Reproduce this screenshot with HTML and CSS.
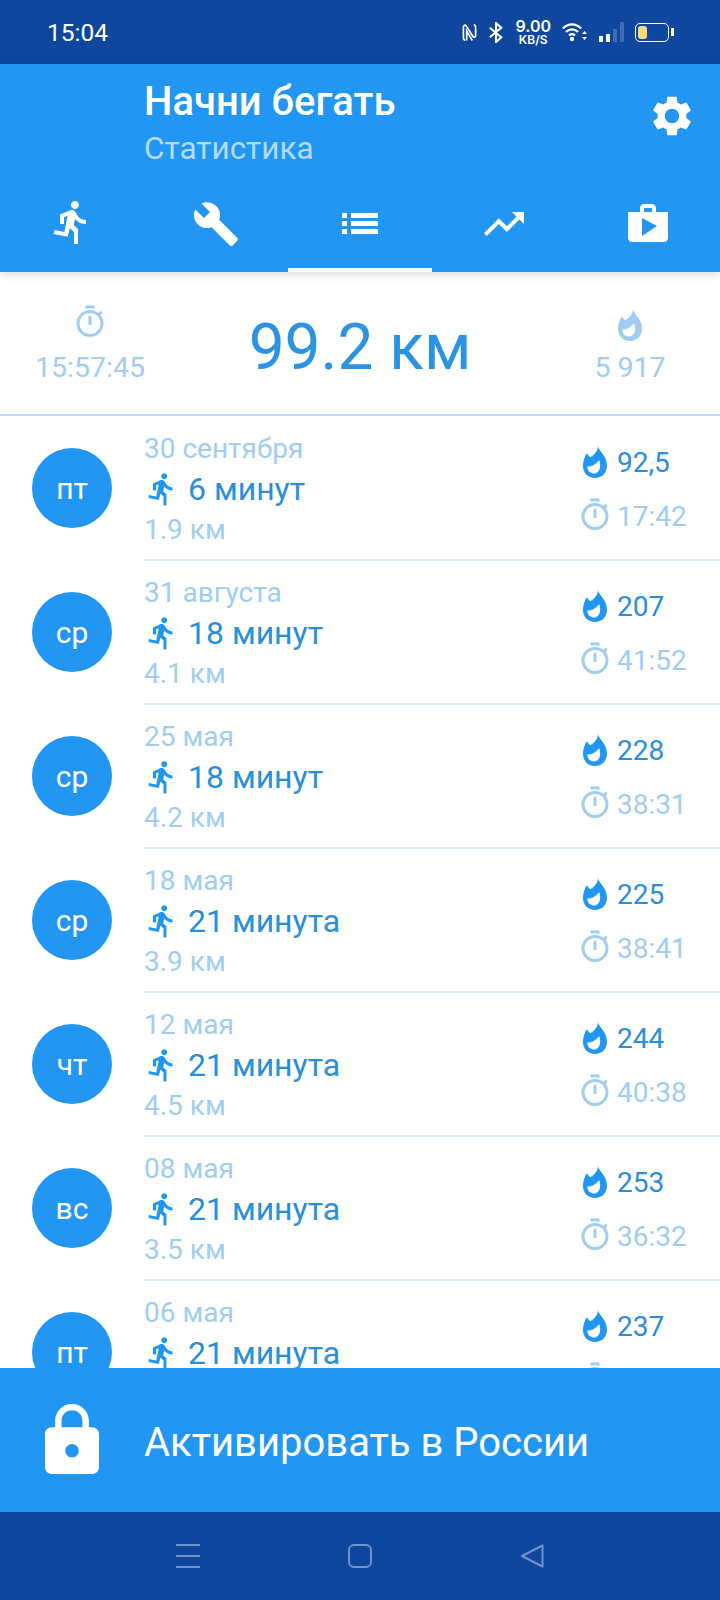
FILE: index.html
```html
<!DOCTYPE html>
<html lang="ru">
  <head>
    <meta charset="UTF-8" />
    <meta name="viewport" content="width=device-width, initial-scale=1.0" />
    <title>Начни бегать</title>
    <link rel="stylesheet" href="styles.css">
  </head>
  <body>
    <!-- Shared icons -->
    <svg class="icon-defs" width="0" height="0">
      <symbol id="i-run" viewBox="0 0 24 24"><path d="M13.49 5.48c1.1 0 2-.9 2-2s-.9-2-2-2-2 .9-2 2 .9 2 2 2zm-3.6 13.9l1-4.4 2.1 2v6h2v-7.5l-2.1-2 .6-3c1.3 1.5 3.3 2.5 5.5 2.5v-2c-1.9 0-3.5-1-4.3-2.4l-1-1.6c-.4-.6-1-1-1.7-1-.3 0-.5.1-.8.1l-5.2 2.2v4.7h2v-3.4l1.8-.7-1.6 8.1-4.9-1-.4 2 7 1.4z"/></symbol>
      <symbol id="i-timer" viewBox="0 0 24 24"><path d="M15 1H9v2h6V1zm-4 13h2V8h-2v6zm8.03-6.61l1.42-1.42c-.43-.51-.9-.99-1.41-1.41l-1.42 1.42C16.07 4.74 14.12 4 12 4c-4.97 0-9 4.03-9 9s4.02 9 9 9 9-4.03 9-9c0-2.12-.74-4.07-1.97-5.61zM12 20c-3.87 0-7-3.13-7-7s3.13-7 7-7 7 3.13 7 7-3.13 7-7 7z"/></symbol>
      <symbol id="i-flame" viewBox="0 0 24 32"><path fill-rule="evenodd" d="M15 0C15.500 5 24 9 24 20 24 27 18.500 32 12 32 5 32 0 27 0 20 0 15 1.500 10.500 4 7 4.500 9 6 10.500 7.500 11 11 9 15 5 15 0ZM16 14C13.500 18 9.500 20.500 4.500 20.500 4 24.500 7 27.500 11 27.500 16 27.500 19 21 16 14Z"/></symbol>
    </svg>

    <div class="screen">
      <div class="status-bar">
        <span class="clock">15:04</span>
        <div class="status-icons">
          <svg viewBox="0 0 16 20" width="15" height="19"><path d="M3.500 18.500C2 18 1.500 17 1.500 15.500V4.500C1.500 2 3.500 1.500 4.500 3L11.500 14C12.500 15.500 14.500 15.500 14.500 13.500V4.500C14.500 3 14 2 12.500 1.500M5 18.500V8.500L11 18.500" fill="none" stroke="#fff" stroke-width="1.800"/></svg>
          <svg viewBox="0 0 16 22" width="16" height="21"><path d="M1.500 6l12 10-5.500 5V1l5.500 5-12 10" fill="none" stroke="#fff" stroke-width="2.200"/></svg>
          <div class="speed"><span class="speed-num">9.00</span><span class="speed-unit">KB/S</span></div>
          <svg viewBox="0 0 26 20" width="26" height="20"><path d="M1 6.500c5-5.500 13-5.500 18 0M4 10c3.500-3.500 8.500-3.500 12 0M7 13.500c2-2 4-2 6 0" fill="none" stroke="#fff" stroke-width="2.300"/><circle cx="10" cy="17" r="2.200" fill="#fff"/><path d="M20 12l2.500-3 2.500 3zM20 15l2.500 3 2.500-3z" fill="#fff"/></svg>
          <div class="signal">
            <i class="bar-1"></i><i class="bar-2"></i><i class="bar-3"></i><i class="bar-4"></i>
          </div>
          <div class="battery"><span class="battery-fill"></span></div>
        </div>
      </div>

      <header class="app-bar">
        <div class="app-head">
          <div class="app-titles">
            <h1>Начни бегать</h1>
            <p>Статистика</p>
          </div>
          <svg class="gear" viewBox="0 0 24 24" width="48" height="48"><path d="M19.140 12.940c.04-.3.06-.61.06-.94 0-.32-.02-.64-.07-.94l2.030-1.580c.18-.14.23-.41.12-.61l-1.920-3.320c-.12-.22-.37-.29-.59-.22l-2.390.96c-.5-.38-1.030-.7-1.620-.94l-.36-2.540c-.04-.24-.24-.41-.48-.41h-3.840c-.24 0-.43.17-.47.41l-.36 2.540c-.59.24-1.130.57-1.620.94l-2.390-.96c-.22-.08-.47 0-.59.22L2.740 8.870c-.12.21-.08.47.12.61l2.030 1.580c-.05.3-.09.63-.09.94s.02.64.07.94l-2.030 1.580c-.18.14-.23.41-.12.61l1.920 3.320c.12.22.37.29.59.22l2.390-.96c.5.38 1.030.7 1.620.94l.36 2.540c.05.24.24.41.48.41h3.840c.24 0 .44-.17.47-.41l.36-2.540c.59-.24 1.130-.56 1.620-.94l2.390.96c.22.08.47 0 .59-.22l1.920-3.320c.12-.22.07-.47-.12-.61l-2.010-1.580zM12 15.600c-1.980 0-3.600-1.620-3.600-3.600s1.620-3.600 3.600-3.600 3.600 1.620 3.600 3.600-1.620 3.600-3.600 3.600z"/></svg>
        </div>
        <nav class="tabs">
          <div class="tab tab-run"><svg width="48" height="48"><use href="#i-run"/></svg></div>
          <div class="tab"><svg viewBox="0 0 24 24" width="48" height="48"><path d="M22.700 19l-9.100-9.100c.9-2.300.4-5-1.500-6.900-2-2-5-2.400-7.400-1.300L9 6 6 9 1.600 4.700C.4 7.100.9 10.100 2.900 12.100c1.900 1.900 4.600 2.400 6.900 1.500l9.100 9.100c.4.4 1 .4 1.400 0l2.300-2.300c.5-.4.5-1.100.1-1.400z"/></svg></div>
          <div class="tab tab-active">
            <div class="list-icon"><i></i><i></i><i></i></div>
          </div>
          <div class="tab"><svg viewBox="0 0 24 24" width="48" height="48"><path d="M16 6l2.290 2.290-4.880 4.880-4-4L2 16.590 3.410 18l6-6 4 4 6.300-6.290L22 12V6z"/></svg></div>
          <div class="tab"><svg viewBox="0 0 24 24" width="48" height="48"><path d="M16 6V4c0-1.110-.89-2-2-2h-4c-1.110 0-2 .89-2 2v2H2v13c0 1.110.89 2 2 2h16c1.110 0 2-.89 2-2V6h-6zm-6-2h4v2h-4V4zM9 18V9l7.500 4L9 18z"/></svg></div>
        </nav>
      </header>

      <section class="summary">
        <div class="summary-side">
          <svg class="summary-timer"><use href="#i-timer"/></svg>
          <span>15:57:45</span>
        </div>
        <div class="summary-total">99.2 км</div>
        <div class="summary-side">
          <svg class="summary-flame"><use href="#i-flame"/></svg>
          <span>5 917</span>
        </div>
      </section>

      <div class="list">
        <div class="row">
          <div class="day">пт</div>
          <div class="row-body">
            <div class="row-date">30 сентября</div>
            <div class="row-title"><svg><use href="#i-run"/></svg>6 минут</div>
            <div class="row-dist">1.9 км</div>
          </div>
          <div class="row-stats">
            <div class="stat stat-cal"><svg><use href="#i-flame"/></svg>92,5</div>
            <div class="stat stat-time"><svg><use href="#i-timer"/></svg>17:42</div>
          </div>
        </div>
        <div class="row">
          <div class="day">ср</div>
          <div class="row-body">
            <div class="row-date">31 августа</div>
            <div class="row-title"><svg><use href="#i-run"/></svg>18 минут</div>
            <div class="row-dist">4.1 км</div>
          </div>
          <div class="row-stats">
            <div class="stat stat-cal"><svg><use href="#i-flame"/></svg>207</div>
            <div class="stat stat-time"><svg><use href="#i-timer"/></svg>41:52</div>
          </div>
        </div>
        <div class="row">
          <div class="day">ср</div>
          <div class="row-body">
            <div class="row-date">25 мая</div>
            <div class="row-title"><svg><use href="#i-run"/></svg>18 минут</div>
            <div class="row-dist">4.2 км</div>
          </div>
          <div class="row-stats">
            <div class="stat stat-cal"><svg><use href="#i-flame"/></svg>228</div>
            <div class="stat stat-time"><svg><use href="#i-timer"/></svg>38:31</div>
          </div>
        </div>
        <div class="row">
          <div class="day">ср</div>
          <div class="row-body">
            <div class="row-date">18 мая</div>
            <div class="row-title"><svg><use href="#i-run"/></svg>21 минута</div>
            <div class="row-dist">3.9 км</div>
          </div>
          <div class="row-stats">
            <div class="stat stat-cal"><svg><use href="#i-flame"/></svg>225</div>
            <div class="stat stat-time"><svg><use href="#i-timer"/></svg>38:41</div>
          </div>
        </div>
        <div class="row">
          <div class="day">чт</div>
          <div class="row-body">
            <div class="row-date">12 мая</div>
            <div class="row-title"><svg><use href="#i-run"/></svg>21 минута</div>
            <div class="row-dist">4.5 км</div>
          </div>
          <div class="row-stats">
            <div class="stat stat-cal"><svg><use href="#i-flame"/></svg>244</div>
            <div class="stat stat-time"><svg><use href="#i-timer"/></svg>40:38</div>
          </div>
        </div>
        <div class="row">
          <div class="day">вс</div>
          <div class="row-body">
            <div class="row-date">08 мая</div>
            <div class="row-title"><svg><use href="#i-run"/></svg>21 минута</div>
            <div class="row-dist">3.5 км</div>
          </div>
          <div class="row-stats">
            <div class="stat stat-cal"><svg><use href="#i-flame"/></svg>253</div>
            <div class="stat stat-time"><svg><use href="#i-timer"/></svg>36:32</div>
          </div>
        </div>
        <!-- Last row runs under the banner -->
        <div class="row">
          <div class="day">пт</div>
          <div class="row-body">
            <div class="row-date">06 мая</div>
            <div class="row-title"><svg><use href="#i-run"/></svg>21 минута</div>
          </div>
          <div class="row-stats">
            <div class="stat stat-cal"><svg><use href="#i-flame"/></svg>237</div>
            <div class="stat stat-time"><svg><use href="#i-timer"/></svg></div>
          </div>
        </div>
      </div>

      <div class="activate">
        <svg viewBox="4 1 16 21" width="54" height="70" preserveAspectRatio="none"><path d="M18 8h-1V6c0-2.760-2.240-5-5-5S7 3.240 7 6v2H6c-1.100 0-2 .9-2 2v10c0 1.100.9 2 2 2h12c1.100 0 2-.9 2-2V10c0-1.100-.9-2-2-2zm-6 9c-1.100 0-2-.9-2-2s.9-2 2-2 2 .9 2 2-.9 2-2 2zm3.100-9H8.900V6c0-1.710 1.390-3.100 3.100-3.100 1.710 0 3.100 1.390 3.100 3.100v2z"/></svg>
        <span>Активировать в России</span>
      </div>

      <div class="nav-bar">
        <div class="nav-menu"><i></i><i></i><i></i></div>
        <div class="nav-home"></div>
        <svg viewBox="0 0 24 24" width="24" height="24"><path d="M22.500 1.500L2 12l20.500 10.500z" fill="none" stroke="#6f94cc" stroke-width="2" stroke-linejoin="round"/></svg>
      </div>
    </div>
  </body>
</html>
```

FILE: styles.css
```css
/* Basic reset */
* {
  box-sizing: border-box;
}

body {
  margin: 0;
  font-family: Roboto, "Noto Sans", sans-serif;
  background-color: #fff;
}

.icon-defs {
  display: none;
}

.screen {
  display: flex;
  flex-direction: column;
  width: 720px;
  height: 1600px;
  overflow: hidden;
}

/* Status bar */
.status-bar {
  display: flex;
  flex: none;
  align-items: center;
  justify-content: space-between;
  height: 64px;
  padding: 0 51px 0 47px;
  background-color: #0f479f;
  color: #fff;
}

.clock {
  font-size: 24.500px;
}

.status-icons {
  display: flex;
  align-items: center;
  gap: 11px;
}

.speed {
  display: flex;
  flex-direction: column;
  align-items: center;
  font-family: Inter, sans-serif;
  font-weight: 600;
}

.speed-num {
  font-size: 16px;
  line-height: 15px;
}

.speed-unit {
  font-size: 12px;
  line-height: 11px;
}

.signal {
  display: flex;
  align-items: flex-end;
  gap: 3px;
  height: 20px;
}

.signal i {
  display: block;
  width: 4px;
  background-color: #fff;
}

.signal .bar-1 {
  height: 6px;
}

.signal .bar-2 {
  height: 8px;
}

.signal .bar-3 {
  height: 13px;
  background-color: #3f6db5;
}

.signal .bar-4 {
  height: 20px;
  background-color: #3f6db5;
}

.battery {
  position: relative;
  width: 34px;
  height: 19px;
  padding: 2px;
  border: 1.500px solid #fff;
  border-radius: 5px;
}

.battery::after {
  content: "";
  position: absolute;
  top: 4px;
  right: -6px;
  width: 3px;
  height: 8px;
  background-color: #fff;
}

.battery-fill {
  display: block;
  width: 9px;
  height: 100%;
  border-radius: 3px;
  background-color: #f7da7c;
}

/* App bar */
.app-bar {
  position: relative;
  z-index: 2;
  flex: none;
  height: 208px;
  background-color: #2196f3;
  box-shadow: 0 3px 8px rgba(0, 0, 0, 0.14);
  fill: #fff;
}

.app-head {
  display: flex;
  align-items: flex-start;
  justify-content: space-between;
  height: 120px;
  padding: 14px 24px 0 144px;
}

.app-titles h1 {
  margin: 0;
  font-size: 40px;
  font-weight: 500;
  line-height: 48px;
  color: #fff;
}

.app-titles p {
  margin: 0;
  font-size: 31.500px;
  line-height: 46px;
  color: #b3dcfb;
}

.gear {
  margin-top: 14px;
}

.tabs {
  display: grid;
  grid-template-columns: repeat(5, 144px);
  height: 88px;
}

.tab {
  display: flex;
  align-items: flex-start;
  justify-content: center;
  padding-top: 16px;
}

.tab-run {
  padding-top: 14px;
}

.tab-active {
  border-bottom: 4px solid #fff;
}

.list-icon {
  display: flex;
  flex-direction: column;
  gap: 3px;
  width: 36px;
  margin-top: 13px;
}

.list-icon i {
  display: block;
  height: 5px;
  background: linear-gradient(to right, #fff 5px, transparent 5px, transparent 9px, #fff 9px);
}

/* Totals */
.summary {
  display: grid;
  flex: none;
  grid-template-columns: 180px 360px 180px;
  height: 144px;
  border-bottom: 2px solid #bbdefb;
}

.summary-side {
  display: flex;
  flex-direction: column;
  align-items: center;
  padding-top: 32px;
  font-size: 28.500px;
  line-height: 36px;
  color: #a0cdf0;
  fill: #9fcdf2;
}

.summary-timer {
  width: 36px;
  height: 36px;
  margin-bottom: 10px;
}

.summary-flame {
  width: 24px;
  height: 32px;
  margin: 5px 0 9px;
}

.summary-total {
  padding-top: 38px;
  font-size: 64px;
  line-height: 76px;
  text-align: center;
  color: #2b92e4;
}

/* Workout list */
.list {
  flex: 1;
  min-height: 0;
  overflow: hidden;
}

.row {
  position: relative;
  display: flex;
  height: 144px;
}

.row + .row::before {
  content: "";
  position: absolute;
  top: -1px;
  left: 144px;
  right: 0;
  height: 2px;
  background-color: #d8ecfb;
}

.day {
  display: flex;
  flex: none;
  align-items: center;
  justify-content: center;
  width: 80px;
  height: 80px;
  margin: 32px 32px 0;
  border-radius: 50%;
  background-color: #2196f3;
  font-size: 30px;
  color: #fff;
}

.row-body {
  flex: 1;
  padding-top: 15px;
}

.row-date,
.row-dist {
  font-size: 28px;
  line-height: 36px;
  color: #a0cdf0;
}

.row-dist {
  margin-top: 1px;
}

.row-title {
  display: flex;
  align-items: center;
  gap: 8px;
  height: 44px;
  font-size: 32px;
  color: #2b8ddc;
  fill: #2196f3;
}

.row-title svg {
  width: 36px;
  height: 36px;
}

.row-stats {
  flex: none;
  width: 140px;
  padding-top: 29px;
  font-size: 28px;
}

.stat {
  display: flex;
  align-items: center;
  height: 34px;
}

.stat-cal {
  margin-bottom: 20px;
  color: #2b8ddc;
  fill: #2196f3;
}

.stat-cal svg {
  width: 24px;
  height: 32px;
  margin: 0 10px 0 3px;
}

.stat-time {
  color: #a0cdf0;
  fill: #9fcdf2;
}

.stat-time svg {
  width: 36px;
  height: 36px;
  margin: -3px 4px 0 -3px;
}

/* Activate banner */
.activate {
  position: relative;
  z-index: 2;
  display: flex;
  flex: none;
  align-items: center;
  gap: 45px;
  height: 144px;
  padding-left: 45px;
  background-color: #2196f3;
  fill: #fff;
  font-size: 40px;
  color: #fff;
}

.activate svg {
  margin-bottom: 3px;
}

.activate span {
  padding-top: 4px;
}

/* Navigation bar */
.nav-bar {
  display: grid;
  flex: none;
  grid-template-columns: 24px 24px 24px;
  justify-content: center;
  justify-items: center;
  align-items: center;
  column-gap: 148px;
  height: 88px;
  background-color: #0f479f;
}

.nav-menu {
  display: flex;
  flex-direction: column;
  gap: 9px;
  width: 24px;
}

.nav-menu i {
  display: block;
  height: 2px;
  background-color: #6f94cc;
}

.nav-home {
  width: 24px;
  height: 24px;
  border: 2px solid #6f94cc;
  border-radius: 6px;
}
```
